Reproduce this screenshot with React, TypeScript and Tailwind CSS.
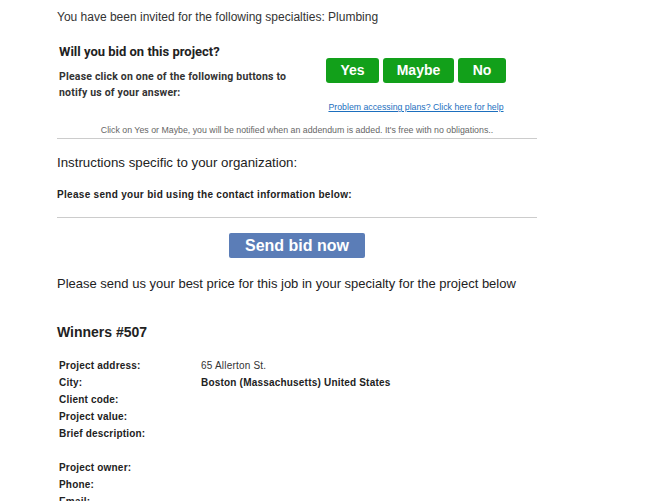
export default function App() {
  const rows: [string, string, boolean][] = [
    ["Project address:", "65 Allerton St.", false],
    ["City:", "Boston (Massachusetts) United States", true],
    ["Client code:", "", false],
    ["Project value:", "", false],
    ["Brief description:", "", false],
  ];
  const owner = ["Project owner:", "Phone:", "Email:"];

  return (
    <div className="h-[501px] overflow-hidden bg-white font-['Liberation_Sans',Arial,sans-serif] text-[#333]">
      <div className="ml-[57px] w-[480px]">
        <p className="pt-[10px] text-[12px] leading-[15px] text-[#333]">
          You have been invited for the following specialties: Plumbing
        </p>

        <div className="mt-[19px] flex">
          <div className="w-[269px] pl-[2px]">
            <h2 className="font-['Roboto',sans-serif] text-[13px] font-bold leading-[16px] text-[#222]">
              Will you bid on this project?
            </h2>
            <p className="mt-[9px] w-[240px] font-['Roboto',sans-serif] text-[10.5px] font-bold leading-[16px] tracking-[0.2px] text-[#333]">
              Please click on one of the following buttons to notify us of your answer:
            </p>
          </div>
          <div className="flex w-[180px] flex-col items-center pt-[14px]">
            <div className="flex gap-[4px]">
              <button className="h-[25px] w-[53px] rounded-[3px] bg-[#12a01a] text-[14px] font-bold text-white">
                Yes
              </button>
              <button className="h-[25px] w-[71px] rounded-[3px] bg-[#12a01a] text-[14px] font-bold text-white">
                Maybe
              </button>
              <button className="h-[25px] w-[48px] rounded-[3px] bg-[#12a01a] text-[14px] font-bold text-white">
                No
              </button>
            </div>
            <a href="#" className="mt-[18px] whitespace-nowrap text-[8.75px] leading-[12px] text-[#1d6fbe] underline">
              Problem accessing plans? Click here for help
            </a>
          </div>
        </div>

        <p className="mt-[11px] text-center text-[8.8px] leading-[12px] text-[#666]">
          Click on Yes or Maybe, you will be notified when an addendum is added. It's free with no obligations..
        </p>
        <hr className="mt-[2px] border-t border-[#ccc]" />

        <h2 className="mt-[16px] text-[13.3px] leading-[16px] text-[#222]">
          Instructions specific to your organization:
        </h2>
        <p className="mt-[17px] text-[10px] font-bold leading-[13px] tracking-[0.3px] text-[#222]">
          Please send your bid using the contact information below:
        </p>
        <hr className="mt-[16px] border-t border-[#ccc]" />

        <div className="mt-[15px] flex justify-center">
          <button className="h-[25px] w-[136px] rounded-[2px] bg-[#5b7db7] text-[16px] font-bold leading-[20px] text-white">
            Send bid now
          </button>
        </div>

        <p className="mt-[18px] text-[13px] leading-[16px] text-[#222]">
          Please send us your best price for this job in your specialty for the project below
        </p>

        <h2 className="mt-[31px] text-[14px] font-bold leading-[18px] text-[#222]">Winners #507</h2>

        <div className="mt-[16px] pl-[2px] text-[10px] leading-[17px] tracking-[0.2px]">
          {rows.map(([label, value, bold]) => (
            <div key={label} className="flex">
              <div className="w-[142px] font-bold text-[#222]">{label}</div>
              <div className={bold ? "font-bold text-[#222]" : "text-[#333]"}>{value}</div>
            </div>
          ))}
          <div className="h-[17px]" />
          {owner.map((label) => (
            <div key={label} className="flex">
              <div className="w-[142px] font-bold text-[#222]">{label}</div>
            </div>
          ))}
        </div>
      </div>
    </div>
  );
}
